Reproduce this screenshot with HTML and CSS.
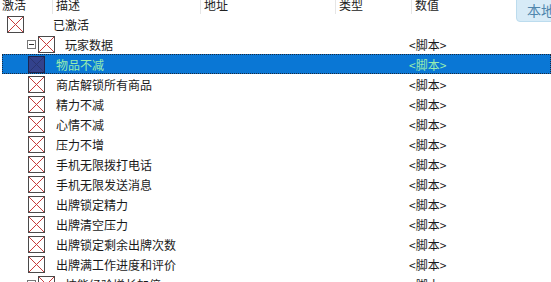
FILE: index.html
```html
<!DOCTYPE html>
<html lang="zh-CN">
<head>
    <meta charset="UTF-8">
    <meta name="viewport" content="width=device-width, initial-scale=1.0">
    <title>脚本列表</title>
    <link rel="stylesheet" href="styles.css">
</head>
<body>

    <div class="list">
        <div class="head">
            <div class="col col-active">激活</div>
            <div class="col col-desc">描述</div>
            <div class="col col-addr">地址</div>
            <div class="col col-type">类型</div>
            <div class="col col-value">数值</div>
        </div>

        <div class="row lv0">
            <div class="name"><span class="box"></span><span class="label">已激活</span></div>
            <div class="value"></div>
        </div>
        <div class="row lv1">
            <div class="name"><span class="toggle"></span><span class="box"></span><span class="label">玩家数据</span></div>
            <div class="value">&lt;脚本&gt;</div>
        </div>
        <div class="row lv2 selected">
            <div class="name"><span class="box"></span><span class="label">物品不减</span></div>
            <div class="value">&lt;脚本&gt;</div>
        </div>
        <div class="row lv2">
            <div class="name"><span class="box"></span><span class="label">商店解锁所有商品</span></div>
            <div class="value">&lt;脚本&gt;</div>
        </div>
        <div class="row lv2">
            <div class="name"><span class="box"></span><span class="label">精力不减</span></div>
            <div class="value">&lt;脚本&gt;</div>
        </div>
        <div class="row lv2">
            <div class="name"><span class="box"></span><span class="label">心情不减</span></div>
            <div class="value">&lt;脚本&gt;</div>
        </div>
        <div class="row lv2">
            <div class="name"><span class="box"></span><span class="label">压力不增</span></div>
            <div class="value">&lt;脚本&gt;</div>
        </div>
        <div class="row lv2">
            <div class="name"><span class="box"></span><span class="label">手机无限拨打电话</span></div>
            <div class="value">&lt;脚本&gt;</div>
        </div>
        <div class="row lv2">
            <div class="name"><span class="box"></span><span class="label">手机无限发送消息</span></div>
            <div class="value">&lt;脚本&gt;</div>
        </div>
        <div class="row lv2">
            <div class="name"><span class="box"></span><span class="label">出牌锁定精力</span></div>
            <div class="value">&lt;脚本&gt;</div>
        </div>
        <div class="row lv2">
            <div class="name"><span class="box"></span><span class="label">出牌清空压力</span></div>
            <div class="value">&lt;脚本&gt;</div>
        </div>
        <div class="row lv2">
            <div class="name"><span class="box"></span><span class="label">出牌锁定剩余出牌次数</span></div>
            <div class="value">&lt;脚本&gt;</div>
        </div>
        <div class="row lv2">
            <div class="name"><span class="box"></span><span class="label">出牌满工作进度和评价</span></div>
            <div class="value">&lt;脚本&gt;</div>
        </div>
        <div class="row lv1">
            <div class="name"><span class="toggle"></span><span class="box"></span><span class="label">技能经验增长加倍</span></div>
            <div class="value">&lt;脚本&gt;</div>
        </div>
    </div>

    <div class="local-btn">本地</div>

</body>
</html>
```

FILE: styles.css
```css
body {
    font-family: "Noto Sans CJK SC", "Microsoft YaHei", sans-serif;
    font-size: 12px;
    color: #1a1a1a;
    background-color: #fff;
    margin: 0;
    padding: 0;
    overflow: hidden;
    height: 282px;
}
.list {
    width: 551px;
}
.head {
    display: flex;
    height: 14px;
    overflow: hidden;
}
.col {
    line-height: 12px;
    margin-top: -1px;
    padding-left: 2px;
    border-right: 1px solid #e6e6e6;
    color: #222;
}
.col-active { width: 50px; }
.col-desc { width: 144px; padding-left: 3px; }
.col-addr { width: 131px; padding-left: 3px; }
.col-type { width: 72px; padding-left: 3px; }
.col-value { flex: 1; padding-left: 3px; border-right: none; }

.row {
    display: grid;
    grid-template-columns: 409px 1fr;
    height: 20px;
    align-items: center;
}
.name {
    display: flex;
    align-items: center;
    height: 20px;
}
.value {
    white-space: nowrap;
}
.box {
    width: 15px;
    height: 15px;
    border: 1px solid #4a4a4a;
    background:
        linear-gradient(to top right, transparent calc(50% - 0.6px), #c83c3c calc(50% - 0.6px), #c83c3c calc(50% + 0.6px), transparent calc(50% + 0.6px)),
        linear-gradient(to bottom right, transparent calc(50% - 0.6px), #c83c3c calc(50% - 0.6px), #c83c3c calc(50% + 0.6px), transparent calc(50% + 0.6px)),
        #fff;
}
.toggle {
    position: relative;
    width: 7px;
    height: 7px;
    border: 1px solid #777;
    margin-right: 2px;
}
.toggle::after {
    content: "";
    position: absolute;
    left: 1px;
    right: 1px;
    top: 3px;
    height: 1px;
    background-color: #333;
}
.lv0 .name { padding-left: 7px; }
.lv0 .label { margin-left: 29px; }
.lv1 .name { padding-left: 27px; }
.lv1 .label { margin-left: 10px; }
.lv2 .name { padding-left: 28px; }
.lv2 .label { margin-left: 11px; }

.selected {
    margin-left: 2px;
    grid-template-columns: 407px 1fr;
    background-color: #0a77d5;
    outline: 1px dotted #1b2a40;
    outline-offset: -1px;
    color: #98eeb0;
}
.selected .name { padding-left: 26px; }
.selected .box {
    border-color: #1c2550;
    background:
        linear-gradient(to top right, transparent calc(50% - 0.6px), #2a3470 calc(50% - 0.6px), #2a3470 calc(50% + 0.6px), transparent calc(50% + 0.6px)),
        linear-gradient(to bottom right, transparent calc(50% - 0.6px), #2a3470 calc(50% - 0.6px), #2a3470 calc(50% + 0.6px), transparent calc(50% + 0.6px)),
        #33428c;
}

.local-btn {
    position: absolute;
    top: -4px;
    left: 516px;
    width: 40px;
    height: 26px;
    box-sizing: border-box;
    padding: 5px 0 0 10px;
    line-height: 16px;
    background-color: #d7ebf7;
    border: 1px solid #bcdcee;
    border-radius: 4px;
    color: #4f86ad;
    font-size: 14px;
    white-space: nowrap;
}
```
